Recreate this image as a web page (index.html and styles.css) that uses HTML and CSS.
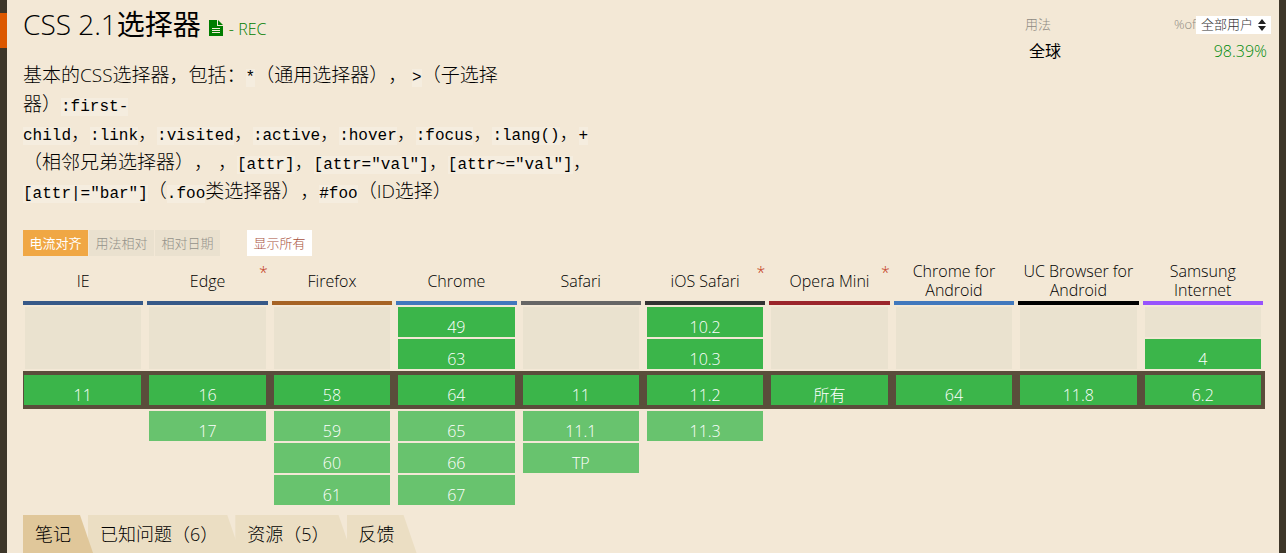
FILE: index.html
```html
<!DOCTYPE html>
<html lang="zh-CN">
<head>
<meta charset="utf-8">
<title>CSS 2.1选择器</title>
<link rel="stylesheet" href="styles.css">
</head>
<body>
<div class="edge"></div>
<main class="feature">
  <header class="top">
    <div class="intro">
      <h1 class="title"><span>CSS 2.1<b>选择器</b></span>
        <a class="status" href="#spec"><svg width="14" height="16" viewBox="0 0 14 16" aria-hidden="true"><path fill="#007d00" d="M0 0h8v6h6v10H0z"/><path fill="#007d00" d="M9 0l5 5H9z"/><path stroke="#f3e8d6" d="M3 8.500h8M3 10.500h8M3 12.500h8"/></svg><span>- REC</span></a>
      </h1>
      <p class="description">基本的CSS选择器，包括：<code>*</code>（通用选择器）， <code>&gt;</code>（子选择<br>器）<code>:first-</code><br><code>child</code>，<code>:link</code>，<code>:visited</code>，<code>:active</code>，<code>:hover</code>，<code>:focus</code>，<code>:lang()</code>，<code>+</code><br>（相邻兄弟选择器）， ，<code>[attr]</code>，<code>[attr="val"]</code>，<code>[attr~="val"]</code>，<br><code>[attr|="bar"]</code>（<code>.foo</code>类选择器），<code>#foo</code>（ID选择）</p>
    </div>
    <section class="usage">
      <div class="usage-head">
        <span>用法</span>
        <label class="of" for="users">%of</label>
        <span class="picker"><select id="users"><option>全部用户</option></select><svg width="8" height="12" viewBox="0 0 8 12" aria-hidden="true"><path fill="#222" d="M0 5l4-5 4 5zM0 7h8l-4 5z"/></svg></span>
      </div>
      <div class="usage-row"><span class="region">全球</span><span class="percent">98.39%</span></div>
    </section>
  </header>

  <div class="modes">
    <button class="mode active" type="button">电流对齐</button>
    <button class="mode" type="button">用法相对</button>
    <button class="mode" type="button">相对日期</button>
    <button class="mode all" type="button">显示所有</button>
  </div>

  <table class="support">
    <thead>
      <tr>
        <th scope="col"><div class="name ie">IE</div></th>
        <th scope="col"><div class="name ie">Edge<span class="note">*</span></div></th>
        <th scope="col"><div class="name firefox">Firefox</div></th>
        <th scope="col"><div class="name chrome">Chrome</div></th>
        <th scope="col"><div class="name safari">Safari</div></th>
        <th scope="col"><div class="name ios">iOS Safari<span class="note">*</span></div></th>
        <th scope="col"><div class="name opera">Opera Mini<span class="note">*</span></div></th>
        <th scope="col"><div class="name chrome">Chrome for Android</div></th>
        <th scope="col"><div class="name uc">UC Browser for Android</div></th>
        <th scope="col"><div class="name samsung">Samsung Internet</div></th>
      </tr>
    </thead>
    <tbody>
      <tr>
        <td rowspan="2"><div class="cell none tall"></div></td>
        <td rowspan="2"><div class="cell none tall"></div></td>
        <td rowspan="2"><div class="cell none tall"></div></td>
        <td><div class="cell">49</div></td>
        <td rowspan="2"><div class="cell none tall"></div></td>
        <td><div class="cell">10.2</div></td>
        <td rowspan="2"><div class="cell none tall"></div></td>
        <td rowspan="2"><div class="cell none tall"></div></td>
        <td rowspan="2"><div class="cell none tall"></div></td>
        <td><div class="cell none"></div></td>
      </tr>
      <tr>
        <td><div class="cell">63</div></td>
        <td><div class="cell">10.3</div></td>
        <td><div class="cell">4</div></td>
      </tr>
      <tr class="current">
        <td><div class="cell">11</div></td>
        <td><div class="cell">16</div></td>
        <td><div class="cell">58</div></td>
        <td><div class="cell">64</div></td>
        <td><div class="cell">11</div></td>
        <td><div class="cell">11.2</div></td>
        <td><div class="cell">所有</div></td>
        <td><div class="cell">64</div></td>
        <td><div class="cell">11.8</div></td>
        <td><div class="cell">6.2</div></td>
      </tr>
      <tr class="future">
        <td></td>
        <td><div class="cell">17</div></td>
        <td><div class="cell">59</div></td>
        <td><div class="cell">65</div></td>
        <td><div class="cell">11.1</div></td>
        <td><div class="cell">11.3</div></td>
        <td></td><td></td><td></td><td></td>
      </tr>
      <tr class="future">
        <td></td><td></td>
        <td><div class="cell">60</div></td>
        <td><div class="cell">66</div></td>
        <td><div class="cell">TP</div></td>
        <td></td><td></td><td></td><td></td><td></td>
      </tr>
      <tr class="future">
        <td></td><td></td>
        <td><div class="cell">61</div></td>
        <td><div class="cell">67</div></td>
        <td></td><td></td><td></td><td></td><td></td><td></td>
      </tr>
    </tbody>
  </table>

  <nav class="tabs">
    <a class="tab selected" href="#notes">笔记</a>
    <a class="tab" href="#issues">已知问题（6）</a>
    <a class="tab" href="#resources">资源（5）</a>
    <a class="tab" href="#feedback">反馈</a>
  </nav>
</main>
</body>
</html>
```

FILE: styles.css
```css
* { box-sizing: border-box; }

body {
  margin: 0;
  padding: 0 7px;
  background: #3d3629;
  color: #000;
  font: 300 16px/19px "Open Sans", "Noto Sans CJK SC", sans-serif;
  text-spacing-trim: space-all;
}

.edge {
  position: absolute;
  left: 0;
  top: 13px;
  width: 7px;
  height: 35px;
  background: #dc5800;
}

.feature {
  min-height: 100vh;
  padding: 0 16px;
  background: #f3e8d6;
}

.top {
  display: flex;
  justify-content: space-between;
}

.title {
  display: flex;
  align-items: baseline;
  gap: 8px;
  margin: 0;
  padding-top: 4px;
  font-size: 28px;
  font-weight: 300;
  line-height: 40px;
}

.title b { font-weight: 400; }

.status {
  color: #007d00;
  font-size: 16px;
  line-height: 19px;
  text-decoration: none;
}

.status svg {
  margin-right: 6px;
  vertical-align: -1px;
}

.description {
  margin: 17px 0 0;
  font-size: 19px;
  line-height: 29px;
  white-space: nowrap;
}

code {
  background: #f5eddf;
  font: 400 16px/19px "Liberation Mono", monospace;
}

.usage {
  width: 246px;
  margin-right: -8px;
  padding-top: 15px;
}

.usage-head {
  display: flex;
  align-items: center;
  color: #8e8a82;
  font-size: 13px;
}

.of { margin-left: auto; }

.picker {
  display: flex;
  align-items: center;
  gap: 5px;
  height: 18px;
  padding: 0 5px;
  background: #fff;
}

.picker select {
  appearance: none;
  width: 52px;
  padding: 0;
  border: 0;
  background: transparent;
  color: #333;
  font: inherit;
}

.usage-row {
  display: flex;
  justify-content: space-between;
  padding: 8px 4px 0;
}

.region { font-weight: 400; }

.percent { color: #008a0c; }

.modes {
  display: flex;
  gap: 1px;
  margin-top: 24px;
}

.mode {
  height: 26px;
  padding: 0 6px;
  border: 0;
  min-width: 65px;
  background: #eae1cf;
  color: #94928a;
  font: 300 13px/26px "Open Sans", "Noto Sans CJK SC", sans-serif;
}

.mode.active {
  background: #f0a744;
  color: #fff;
  font-weight: 400;
}

.mode.all {
  margin-left: 26px;
  background: #fff;
  color: #a8503c;
}

.support {
  width: calc(100% + 4px);
  margin-top: 5px;
  table-layout: fixed;
  border-spacing: 0;
}

.support th {
  padding: 0 4px 0 0;
  font-weight: 300;
}

.name {
  position: relative;
  display: flex;
  align-items: center;
  justify-content: center;
  height: 44px;
  border-bottom: 4px solid;
}

.note {
  position: absolute;
  top: 2px;
  right: 0;
  color: #c43c1c;
}

.ie { border-color: #375988; }
.firefox { border-color: #a66324; }
.chrome { border-color: #4178bd; }
.safari { border-color: #666; }
.ios { border-color: #333; }
.opera { border-color: #9b252b; }
.uc { border-color: #000; }
.samsung { border-color: #9753fc; }

.support td {
  padding: 2px 6px 0 2px;
}

.cell {
  height: 30px;
  padding-top: 11px;
  background: #3bb54a;
  color: #fff;
  text-align: center;
}

.none { background: #eae2cf; }
.tall { height: 62px; }

.current td {
  padding: 4px 6px 4px 2px;
  border-top: 2px solid #f3e8d6;
  background: #5a4d3b;
}

.current td:first-child { padding-left: 1px; }

.current td:last-child {
  padding-right: 4px;
  border-right: 2px solid #f3e8d6;
}

.future .cell {
  background: #68c36e;
}

.tabs {
  display: flex;
  margin-top: 10px;
}

.tab {
  margin-right: -5px;
  padding: 0 22px 0 12px;
  background: #ebdec3;
  clip-path: polygon(0 0, calc(100% - 13px) 0, 100% 100%, 0 100%);
  color: #000;
  font-size: 18px;
  line-height: 38px;
  text-decoration: none;
}

.tab.selected {
  position: relative;
  z-index: 1;
  background: #e0c79a;
}
```
